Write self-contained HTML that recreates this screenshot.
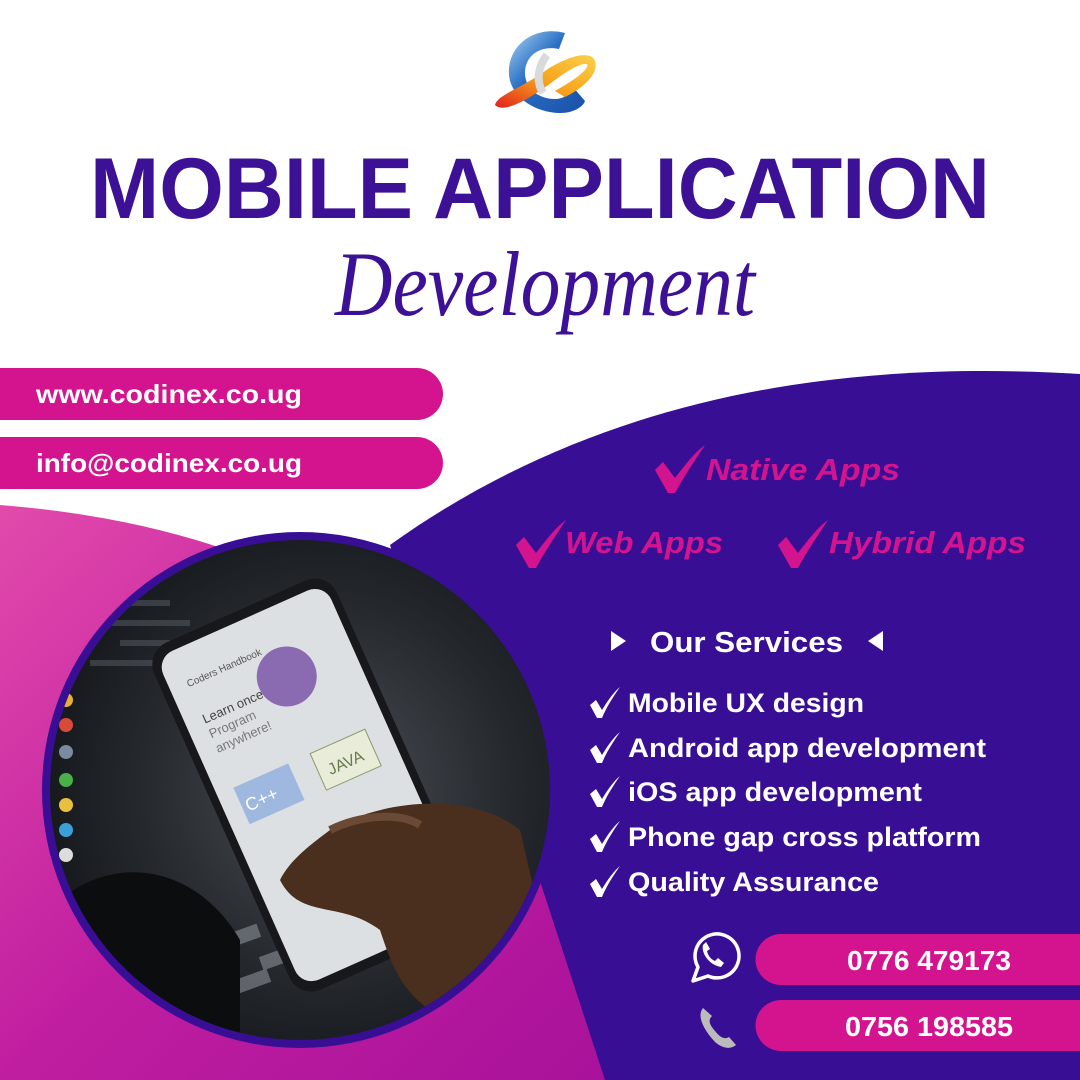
<!DOCTYPE html>
<html><head><meta charset="utf-8"><style>
html,body{margin:0;padding:0;width:1080px;height:1080px;overflow:hidden;background:#fff}
svg{display:block}
</style></head><body>
<svg width="1080" height="1080" viewBox="0 0 1080 1080" xmlns="http://www.w3.org/2000/svg">
<defs>
<linearGradient id="mg" x1="0" y1="0" x2="1" y2="1">
<stop offset="0" stop-color="#e24aab"/><stop offset="0.5" stop-color="#c01ea0"/><stop offset="1" stop-color="#a8129a"/></linearGradient>
<radialGradient id="ph" cx="0.55" cy="0.5" r="0.6">
<stop offset="0" stop-color="#4a4f55"/><stop offset="0.6" stop-color="#25292e"/><stop offset="1" stop-color="#111316"/></radialGradient>
<linearGradient id="lg1" x1="0" y1="0" x2="1" y2="1">
<stop offset="0" stop-color="#a9d4f2"/><stop offset="0.4" stop-color="#2a6fc4"/><stop offset="1" stop-color="#1a4fa8"/></linearGradient>
<linearGradient id="lg2" x1="0" y1="1" x2="1" y2="0">
<stop offset="0" stop-color="#e0201e"/><stop offset="0.5" stop-color="#f7a21b"/><stop offset="1" stop-color="#fbd24a"/></linearGradient>
<clipPath id="cc"><circle cx="300" cy="790" r="250"/></clipPath>
</defs>
<path d="M1080,374 C880,362 620,380 390,545 L560,1080 L1080,1080 Z" fill="#380f94"/>
<path d="M0,505 C250,525 450,620 520,820 L605,1080 L0,1080 Z" fill="url(#mg)"/>
<circle cx="300" cy="790" r="258" fill="#380f94"/>
<g clip-path="url(#cc)">
<rect x="40" y="530" width="520" height="520" fill="url(#ph)"/>
<g fill="#5a6068" opacity="0.5">
<rect x="110" y="600" width="60" height="6"/><rect x="100" y="620" width="90" height="6"/><rect x="120" y="640" width="50" height="6"/><rect x="90" y="660" width="80" height="6"/>
</g>
<circle cx="66" cy="700" r="7" fill="#e8b030"/><circle cx="66" cy="725" r="7" fill="#d84a3a"/><circle cx="66" cy="752" r="7" fill="#7a8aa0"/><circle cx="66" cy="780" r="7" fill="#4ab04a"/><circle cx="66" cy="805" r="7" fill="#e8c040"/><circle cx="66" cy="830" r="7" fill="#3aa0d8"/><circle cx="66" cy="855" r="7" fill="#ddd"/>
<g fill="#8a9096" opacity="0.6"><rect x="220" y="930" width="40" height="14" transform="rotate(-20 240 937)"/><rect x="260" y="950" width="40" height="14" transform="rotate(-20 280 957)"/><rect x="230" y="975" width="40" height="14" transform="rotate(-20 250 982)"/></g>
<path d="M60,900 C120,850 200,870 240,940 L240,1060 L60,1060 Z" fill="#0c0d0f"/>
<g transform="rotate(-24 300 780)">
<rect x="210" y="600" width="200" height="380" rx="24" fill="#16181b"/>
<rect x="218" y="610" width="184" height="360" rx="18" fill="#dde0e2"/>
<circle cx="330" cy="680" r="30" fill="#8a6ab0"/>
<rect x="236" y="760" width="60" height="40" fill="#9fb8e0"/>
<rect x="320" y="760" width="60" height="40" fill="#e8ecd8" stroke="#8a9a70"/>
<rect x="300" y="870" width="60" height="60" fill="#8ab0e0"/>
<text x="236" y="650" font-family="Liberation Sans" font-size="10" fill="#555">Coders Handbook</text>
<text x="236" y="690" font-family="Liberation Sans" font-size="13" fill="#444">Learn once</text>
<text x="236" y="706" font-family="Liberation Sans" font-size="13" fill="#777">Program</text>
<text x="236" y="722" font-family="Liberation Sans" font-size="13" fill="#777">anywhere!</text>
<text x="240" y="788" font-family="Liberation Sans" font-size="18" fill="#fff">C++</text>
<text x="330" y="788" font-family="Liberation Sans" font-size="16" fill="#6a7a50">JAVA</text>
</g>
<path d="M330,830 C380,800 470,790 520,830 L560,1000 L430,1010 C400,990 390,960 380,930 C340,900 300,920 280,880 C290,860 310,845 330,830 Z" fill="#4a2e1e"/>
<path d="M330,830 C360,815 400,812 420,825" stroke="#6a4a34" stroke-width="8" fill="none"/>
</g>
<g transform="translate(495,25)">
<path d="M70,8 C40,0 12,20 14,50 C16,72 40,88 66,88 C78,88 88,82 90,76 L78,62 C74,70 68,74 60,74 C42,74 30,62 30,48 C30,30 46,20 64,24 Z" fill="url(#lg1)"/>
<path d="M0,80 C10,90 40,70 60,55 C80,40 95,35 92,42 C88,50 70,60 60,66 L70,72 C90,62 104,48 100,36 C96,24 70,32 50,46 C25,64 2,70 0,80 Z" fill="url(#lg2)"/>
<path d="M52,30 C44,40 40,55 48,68" stroke="#d8dadc" stroke-width="8" fill="none"/>
</g>
<text x="540" y="218" text-anchor="middle" font-family="Liberation Sans" font-weight="bold" font-size="86" fill="#3d1196" textLength="900" lengthAdjust="spacingAndGlyphs">MOBILE APPLICATION</text>
<text x="545" y="315" text-anchor="middle" font-family="Liberation Serif" font-style="italic" font-size="92" fill="#3d1196" textLength="420" lengthAdjust="spacingAndGlyphs">Development</text>
<path d="M0,368 H417 A26,26 0 0 1 417,420 H0 Z" fill="#d4148f"/>
<path d="M0,437 H417 A26,26 0 0 1 417,489 H0 Z" fill="#d4148f"/>
<g font-family="Liberation Sans" font-weight="bold" font-size="26" fill="#fff">
<text x="36" y="403" textLength="266" lengthAdjust="spacingAndGlyphs">www.codinex.co.ug</text>
<text x="36" y="472" textLength="266" lengthAdjust="spacingAndGlyphs">info@codinex.co.ug</text>
</g>
<g fill="#d4148f">
<path d="M655,470 L663,462 L675,478 C685,465 695,452 705,445 C695,460 683,478 675,493 L668,493 Z"/>
<path d="M516,545 L524,537 L536,553 C546,540 556,527 566,520 C556,535 544,553 536,568 L529,568 Z"/>
<path d="M778,545 L786,537 L798,553 C808,540 818,527 828,520 C818,535 806,553 798,568 L791,568 Z"/>
</g>
<g font-family="Liberation Sans" font-weight="bold" font-style="italic" font-size="31" fill="#d4148f">
<text x="706" y="480" textLength="194" lengthAdjust="spacingAndGlyphs">Native Apps</text>
<text x="565" y="553" textLength="158" lengthAdjust="spacingAndGlyphs">Web Apps</text>
<text x="829" y="553" textLength="197" lengthAdjust="spacingAndGlyphs">Hybrid Apps</text>
</g>
<path d="M611,631 L626,641 L611,651 Z" fill="#fff"/>
<path d="M883,631 L868,641 L883,651 Z" fill="#fff"/>
<text x="650" y="652" font-family="Liberation Sans" font-weight="bold" font-size="29" fill="#fff" textLength="193" lengthAdjust="spacingAndGlyphs">Our Services</text>
<g fill="#fff">
<path id="ck" d="M590,705 L596,700 L602,710 C608,700 614,692 620,687 C613,697 606,708 602,718 L597,718 Z"/>
<use href="#ck" y="45"/><use href="#ck" y="89"/><use href="#ck" y="134"/><use href="#ck" y="179"/>
</g>
<g font-family="Liberation Sans" font-weight="bold" font-size="27" fill="#fff">
<text x="628" y="712" textLength="236" lengthAdjust="spacingAndGlyphs">Mobile UX design</text>
<text x="628" y="757" textLength="358" lengthAdjust="spacingAndGlyphs">Android app development</text>
<text x="628" y="801" textLength="294" lengthAdjust="spacingAndGlyphs">iOS app development</text>
<text x="628" y="846" textLength="353" lengthAdjust="spacingAndGlyphs">Phone gap cross platform</text>
<text x="628" y="891" textLength="251" lengthAdjust="spacingAndGlyphs">Quality Assurance</text>
</g>
<path d="M781,934 H1080 V985 H781 A25.5,25.5 0 0 1 781,934 Z" fill="#d4148f"/>
<path d="M781,1000 H1080 V1051 H781 A25.5,25.5 0 0 1 781,1000 Z" fill="#d4148f"/>
<g font-family="Liberation Sans" font-weight="bold" font-size="28" fill="#fff" text-anchor="middle">
<text x="929" y="970" textLength="164" lengthAdjust="spacingAndGlyphs">0776 479173</text>
<text x="929" y="1036" textLength="168" lengthAdjust="spacingAndGlyphs">0756 198585</text>
</g>
<g transform="translate(713,955)">
<path d="M-20,26 L-15,12 A22,22 0 1 1 -5,21 Z" fill="none" stroke="#fff" stroke-width="3.5" stroke-linejoin="round"/>
<path d="M-10,-10 C-12,-2 -4,10 8,12 L11,8 L5,3 L2,6 C-3,4 -5,0 -6,-4 L-3,-6 L-7,-13 Z" fill="#fff"/>
</g>
<path d="M703,1008 C697,1015 702,1028 715,1042 C722,1048 730,1050 736,1045 L729,1037 C724,1040 720,1037 715,1031 C709,1024 708,1020 712,1016 Z" fill="#bbbbbb"/>
</svg>
</body></html>
